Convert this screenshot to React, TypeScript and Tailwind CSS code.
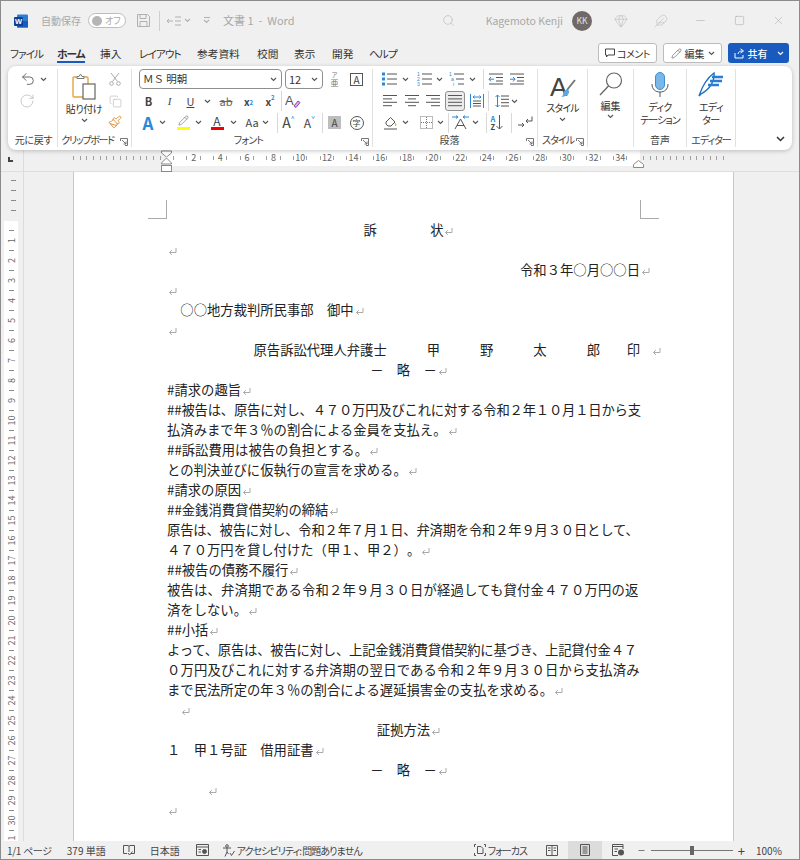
import type { ReactNode } from "react";
import { Copy, Feather, Gem, Minus, Paintbrush, Pencil, RotateCw, Search, Square, Undo2, X } from "lucide-react";

const BLUE = "#2b88d8";
const INK = "#555";

function Chev({ color = "#555" }: { color?: string }) {
  return (
    <svg width="7" height="5" viewBox="0 0 7 5" fill="none" stroke={color} strokeWidth="1.1">
      <path d="M1 1l2.5 2.5L6 1" />
    </svg>
  );
}

function Cell({ className = "", children }: { className?: string; children?: ReactNode }) {
  return <div className={"flex items-center justify-center shrink-0 h-full " + className}>{children}</div>;
}

function Sep({ className = "" }: { className?: string }) {
  return <div className={"w-px h-[20px] shrink-0 bg-[#d8d8d8] " + className} />;
}

function Launcher() {
  return (
    <svg className="absolute right-[3px] bottom-[1px]" width="8" height="8" viewBox="0 0 8 8" fill="none" stroke="#666" strokeWidth="0.9">
      <path d="M0.5 3V0.5H7.5V7.5H5M2 2l4 4M6 3.5V6H3.5" />
    </svg>
  );
}

function Label({ className = "", children }: { className?: string; children: ReactNode }) {
  return <div className={"mt-auto h-[14px] leading-[14px] text-[10px] text-[#444] text-center whitespace-nowrap " + className}>{children}</div>;
}

function LinesIcon({ rows }: { rows: number[][] }) {
  return (
    <svg width="16" height="14" viewBox="0 0 16 14" stroke="#555" strokeWidth="1">
      {rows.map(([a, b], i) => (
        <path key={i} d={`M${a} ${1.5 + i * 3.4}H${b}`} />
      ))}
    </svg>
  );
}

function ListIcon({ kind }: { kind: "bullet" | "number" | "multi" }) {
  const ys = [2, 7, 12];
  return (
    <svg width="16" height="14" viewBox="0 0 16 14" stroke="#555" strokeWidth="1">
      {ys.map((y, i) => {
        const x = kind === "multi" ? i * 2 : 0;
        return (
          <g key={y}>
            {kind === "bullet" ? (
              <rect x={x} y={y - 1.5} width="3" height="3" fill={BLUE} stroke="none" />
            ) : (
              <text x={x} y={y + 2} fontSize="5" fill={BLUE} stroke="none" fontFamily="Liberation Sans">{kind === "multi" ? ["1", "a", "i"][i] : i + 1}</text>
            )}
            <path d={`M${x + 5} ${y}H15`} />
          </g>
        );
      })}
    </svg>
  );
}

function IndentIcon({ dir }: { dir: "in" | "out" }) {
  return (
    <svg width="16" height="12" viewBox="0 0 16 12" fill="none" stroke="#555" strokeWidth="1">
      <path d="M1 1H15M8 4.5H15M8 8H15M1 11H15" />
      <path d={dir === "out" ? "M6 6.2H1M3 4L1 6.2 3 8.4" : "M1 6.2H6M4 4L6 6.2 4 8.4"} stroke={BLUE} />
    </svg>
  );
}

function PasteIcon() {
  return (
    <svg width="24" height="27" viewBox="0 0 24 27" fill="none">
      <rect x="1" y="4" width="15" height="20" rx="1" stroke="#e8a33d" strokeWidth="1.4" />
      <path d="M5 5.5V3.5H7L8.5 1l1.5 2.5H12V5.5Z" fill="#fff" stroke="#777" />
      <rect x="11" y="11" width="12" height="15" fill="#fff" stroke="#666" strokeWidth="1.2" />
    </svg>
  );
}

function Wordmark() {
  return (
    <svg width="14" height="14" viewBox="0 0 14 14">
      <rect x="3" y="0.5" width="11" height="13" rx="1" fill="#2b7cd3" />
      <rect x="3" y="7" width="11" height="6.5" fill="#185abd" />
      <rect x="0" y="3" width="9" height="9" rx="1" fill="#103f91" />
      <text x="4.5" y="10" fontSize="7.5" fontWeight="700" fill="#fff" textAnchor="middle" fontFamily="Liberation Sans">W</text>
    </svg>
  );
}

function Mark({ className = "ml-[1px] -mr-[10px]" }: { className?: string }) {
  return (
    <svg className={"inline-block align-[-1px] " + className} width="9" height="9" viewBox="0 0 9 9" fill="none" stroke="#aaa" strokeWidth="1">
      <path d="M8 1V5.5H1.5M3.8 3.2L1.5 5.5l2.3 2.3" />
    </svg>
  );
}

function Line({ className = "", mark, wrapped, children }: { className?: string; mark?: string; wrapped?: boolean; children?: ReactNode }) {
  return (
    <div className={"h-[20px] leading-[20px] whitespace-pre " + className}>
      {children}
      {!wrapped && <Mark className={mark} />}
    </div>
  );
}

function TitleBar() {
  return (
    <div className="flex items-center h-[39px] pl-[13px] pr-[14px] text-[#a8a8a8] shrink-0">
      <Wordmark />
      <span className="ml-[13px] text-[10px] whitespace-nowrap">自動保存</span>
      <div className="ml-[7px] w-[38px] h-[15px] rounded-full border border-[#bdbdbd] bg-white flex items-center pl-[3px] gap-[3px]">
        <span className="w-[10px] h-[10px] rounded-full bg-[#b5b5b5]" />
        <span className="text-[9px] leading-none [font-feature-settings:'palt']">オフ</span>
      </div>
      <svg className="ml-[11px]" width="13" height="13" viewBox="0 0 13 13" fill="none" stroke="#b0b0b0">
        <path d="M.5.5H10.5L12.5 2.5V12.5H.5ZM3 .5V4.5H9V.5M3 12.5V7.5H10V12.5" />
      </svg>
      <div className="ml-[9px] w-px h-[20px] bg-[#cfcfcf]" />
      <svg className="ml-[7px]" width="14" height="10" viewBox="0 0 14 10" fill="none" stroke="#b0b0b0">
        <path d="M0 5H6M2 3L0 5l2 2M8 1H14M8 5H14M8 9H14" />
      </svg>
      <span className="ml-[3px]"><Chev color="#b0b0b0" /></span>
      <span className="ml-[12px] flex flex-col items-center gap-[1px]">
        <span className="w-[6px] h-px bg-[#b0b0b0]" />
        <Chev color="#b0b0b0" />
      </span>
      <span className="ml-[13px] text-[11px] whitespace-pre">文書 1  -  Word</span>
      <Search className="ml-auto" size={13} color="#b8b8b8" strokeWidth={1.2} />
      <span className="ml-[31px] text-[10.5px] whitespace-nowrap">Kagemoto Kenji</span>
      <div className="ml-[9px] w-[20px] h-[20px] rounded-full bg-[#6f6a68] text-[#e5e5e5] text-[8.5px] flex items-center justify-center">KK</div>
      <Gem className="ml-[22px]" size={14} color="#b8b8b8" strokeWidth={1} />
      <Feather className="ml-[26px]" size={14} color="#b8b8b8" strokeWidth={1} />
      <Minus className="ml-[26px]" size={13} color="#a8a8a8" strokeWidth={1} />
      <Square className="ml-[27px]" size={11} color="#a8a8a8" strokeWidth={1.2} />
      <X className="ml-[27px]" size={13} color="#a8a8a8" strokeWidth={1} />
    </div>
  );
}

function TabRow() {
  return (
    <div className="flex items-start h-[26px] pl-[9px] text-[10.7px] text-[#333] shrink-0 [font-feature-settings:'palt']">
      <span className="w-[47px] pt-[6px] tracking-[-1px]">ファイル</span>
      <span className="w-[43px] pt-[6px] font-bold tracking-[-1px]">
        <span className="inline-block h-[17px] leading-[16px] border-b-2 border-[#185abd]">ホーム</span>
      </span>
      <span className="w-[39px] pt-[6px]">挿入</span>
      <span className="w-[58px] pt-[6px] tracking-[-1px]">レイアウト</span>
      <span className="w-[60px] pt-[6px]">参考資料</span>
      <span className="w-[37px] pt-[6px]">校閲</span>
      <span className="w-[38px] pt-[6px]">表示</span>
      <span className="w-[37px] pt-[6px]">開発</span>
      <span className="w-[40px] pt-[6px] tracking-[-1px]">ヘルプ</span>
      <div className="ml-auto mr-[10px] mt-[3px] flex items-center gap-[6px]">
        <div className="w-[59px] h-[20px] rounded-[3px] border border-[#bcbcbc] bg-white flex items-center justify-center gap-[2px] text-[10px] tracking-[-0.5px]">
          <svg width="10" height="10" viewBox="0 0 10 10" fill="none" stroke="#444"><path d="M.5 1H9.500V7H3L1.500 9V7H.5Z" /></svg>
          コメント
        </div>
        <div className="w-[59px] h-[20px] rounded-[3px] border border-[#bcbcbc] bg-white flex items-center justify-center gap-[3px] text-[10px]">
          <Pencil size={11} color="#444" strokeWidth={1.2} />
          編集
          <Chev />
        </div>
        <div className="w-[61px] h-[20px] rounded-[3px] bg-[#185abd] text-white flex items-center justify-center gap-[3px] text-[10px] font-medium">
          <svg width="11" height="11" viewBox="0 0 11 11" fill="none" stroke="#fff"><path d="M1 5V10H9V7M4 6C4.500 3.800 6 3 8 3M6.500 .8L9.500 3 6.500 5" /></svg>
          <span>共有</span>
          <span className="ml-[6px]"><Chev color="#fff" /></span>
        </div>
      </div>
    </div>
  );
}

function Ribbon() {
  return (
    <div className="mx-[7px] h-[84px] shrink-0 rounded-lg bg-white shadow-[0_1px_4px_rgba(0,0,0,0.22)] flex relative z-10 font-['Noto_Sans_CJK_JP',sans-serif] [font-feature-settings:'palt']">
      {/* 元に戻す */}
      <div className="w-[50px] my-[3px] border-r border-[#e1e1e1] flex flex-col">
        <div className="flex h-[20px] pl-[10px]">
          <Cell className="w-[20px]"><Undo2 size={16} color={INK} strokeWidth={1.3} /></Cell>
          <Cell className="w-[10px]"><Chev /></Cell>
        </div>
        <div className="flex h-[20px] pl-[9px] mt-[2px]">
          <Cell className="w-[20px]"><RotateCw size={16} color="#bdbdbd" strokeWidth={1.2} /></Cell>
        </div>
        <Label className="pl-[2px] tracking-[-0.3px]">元に戻す</Label>
      </div>

      {/* クリップボード */}
      <div className="relative w-[74px] my-[3px] border-r border-[#e1e1e1] flex flex-col">
        <div className="flex pl-[4px]">
          <div className="w-[44px] flex flex-col items-center pt-[4px]">
            <PasteIcon />
            <span className="text-[10px] tracking-[-0.4px] leading-[13px] mt-[2px] whitespace-nowrap text-[#333]">貼り付け</span>
            <span className="mt-[3px]"><Chev /></span>
          </div>
          <div className="w-[18px] flex flex-col">
            <Cell className="!h-[20px]">
              <svg width="12" height="14" viewBox="0 0 12 14" fill="none" stroke="#aaa"><path d="M2 1L8.500 9.500M10 1L3.500 9.500" /><circle cx="2.500" cy="11.500" r="1.800" /><circle cx="9.500" cy="11.500" r="1.800" /></svg>
            </Cell>
            <Cell className="!h-[20px] mt-[2px]"><Copy size={13} color="#aaa" strokeWidth={1} /></Cell>
            <Cell className="!h-[21px]"><Paintbrush size={14} color="#d9822b" strokeWidth={1.5} /></Cell>
          </div>
        </div>
        <Label className="pr-[14px] tracking-[-1.3px]">クリップボード</Label>
        <Launcher />
      </div>

      {/* フォント */}
      <div className="relative w-[241px] my-[3px] border-r border-[#e1e1e1] flex flex-col pl-[7px]">
        <div className="flex h-[20px] items-center">
          <div className="w-[143px] h-[20px] rounded-[4px] border border-[#8f8f8f] flex items-center justify-between pl-[3px] pr-[4px] text-[10.5px] text-[#333] [font-feature-settings:normal] whitespace-pre">
            <span>ＭＳ 明朝</span><Chev />
          </div>
          <div className="ml-[3px] w-[38px] h-[20px] rounded-[4px] border border-[#8f8f8f] flex items-center justify-between pl-[3px] pr-[4px] text-[11px] text-[#333]">
            <span>12</span><Chev />
          </div>
          <Cell className="w-[23px] flex-col text-[#777]">
            <span className="text-[6px] leading-[7px]">ア</span>
            <span className="text-[8px] leading-[9px]">亜</span>
          </Cell>
          <Cell className="w-[21px]">
            <span className="w-[13px] h-[13px] border border-[#555] text-[10px] leading-[12px] text-center text-[#444]">A</span>
          </Cell>
        </div>
        <div className="flex h-[20px] mt-[2px] items-center text-[#444]">
          <Cell className="w-[19px] text-[11px] font-bold">B</Cell>
          <Cell className="w-[23px] text-[11px] italic font-['Liberation_Serif',serif]">I</Cell>
          <Cell className="w-[19px] text-[11px] underline">U</Cell>
          <Cell className="w-[14px]"><Chev /></Cell>
          <Cell className="w-[24px] text-[11px] line-through text-[#666]">ab</Cell>
          <Cell className="w-[21px] text-[10px] font-bold">x<sub className="text-[6px] text-[#2b88d8]">2</sub></Cell>
          <Cell className="w-[22px] text-[10px] font-bold">x<sup className="text-[6px] text-[#2b88d8]">2</sup></Cell>
          <Sep />
          <Cell className="w-[22px]">
            <svg width="16" height="16" viewBox="0 0 16 16" fill="none">
              <text x="0" y="12" fontSize="13" fill="#555" fontFamily="Liberation Sans">A</text>
              <path d="M9 13L13 8l2 1.500-4 5Z" fill="#d9b3e6" stroke="#8e44ad" />
            </svg>
          </Cell>
        </div>
        <div className="flex h-[21px] mt-[1px] items-center text-[#444]">
          <Cell className="w-[18px]"><span className="text-[17px] font-bold leading-none text-[#2b88d8]">A</span></Cell>
          <Cell className="w-[11px]"><Chev /></Cell>
          <Cell className="w-[20px] ml-[5px] flex-col">
            <Pencil size={11} color="#666" strokeWidth={1.3} />
            <span className="w-[13px] h-[3px] mt-[1px] bg-[#ffff00]" />
          </Cell>
          <Cell className="w-[10px]"><Chev /></Cell>
          <Cell className="w-[18px] ml-[5px] flex-col">
            <span className="text-[12px] leading-[12px]">A</span>
            <span className="w-[13px] h-[3px] bg-[#f00000]" />
          </Cell>
          <Cell className="w-[10px] ml-[2px]"><Chev /></Cell>
          <Cell className="w-[16px] ml-[6px] text-[11px]">Aa</Cell>
          <Cell className="w-[10px]"><Chev /></Cell>
          <Sep className="ml-[7px]" />
          <Cell className="w-[21px] text-[14px]"><span>A</span><span className="text-[7px] text-[#2b88d8] -mt-[8px]">^</span></Cell>
          <Cell className="w-[21px] text-[12px]"><span>A</span><span className="text-[7px] text-[#2b88d8] -mt-[7px]">ˇ</span></Cell>
          <Sep className="ml-[2px]" />
          <Cell className="w-[23px]">
            <span className="w-[13px] h-[13px] bg-[#bdbdbd] text-[10px] leading-[13px] text-center">A</span>
          </Cell>
          <Cell className="w-[21px]">
            <span className="w-[14px] h-[14px] rounded-full border border-[#555] text-[8px] leading-[12px] text-center">字</span>
          </Cell>
        </div>
        <Label className="pr-[14px] tracking-[-0.8px]">フォント</Label>
        <Launcher />
      </div>

      {/* 段落 */}
      <div className="relative w-[165px] my-[3px] border-r border-[#e1e1e1] flex flex-col pl-[7px]">
        <div className="flex h-[20px] items-center">
          <Cell className="w-[20px]"><ListIcon kind="bullet" /></Cell>
          <Cell className="w-[10px]"><Chev /></Cell>
          <Cell className="w-[20px] ml-[5px]"><ListIcon kind="number" /></Cell>
          <Cell className="w-[9px]"><Chev /></Cell>
          <Cell className="w-[20px] ml-[3px]"><ListIcon kind="multi" /></Cell>
          <Cell className="w-[10px]"><Chev /></Cell>
          <Sep className="ml-[6px]" />
          <Cell className="w-[20px] ml-[2px]"><IndentIcon dir="out" /></Cell>
          <Cell className="w-[20px] ml-[1px]"><IndentIcon dir="in" /></Cell>
        </div>
        <div className="flex h-[20px] mt-[2px] items-center">
          <Cell className="w-[20px]"><LinesIcon rows={[[1, 15], [1, 10], [1, 15], [1, 10]]} /></Cell>
          <Cell className="w-[20px] ml-[2px]"><LinesIcon rows={[[1, 15], [4, 12], [1, 15], [4, 12]]} /></Cell>
          <Cell className="w-[20px] ml-[1px]"><LinesIcon rows={[[1, 15], [6, 15], [1, 15], [6, 15]]} /></Cell>
          <Cell className="w-[20px] ml-[2px] rounded-[3px] border border-[#8f8f8f] bg-[#ececec]"><LinesIcon rows={[[1, 15], [1, 15], [1, 15], [1, 15]]} /></Cell>
          <Cell className="w-[20px] ml-[2px]">
            <svg width="14" height="14" viewBox="0 0 14 14" fill="none" stroke={BLUE}>
              <path d="M.5 0V14M13.500 0V14M3 3H11M4.500 1.500L3 3l1.500 1.500M9.500 1.500L11 3 9.500 4.500" />
              <path d="M3 7H11M3 9.500H11M3 12H11" stroke="#555" />
            </svg>
          </Cell>
          <Sep className="ml-[1px]" />
          <Cell className="w-[15px] ml-[5px]">
            <svg width="14" height="14" viewBox="0 0 14 14" fill="none" stroke={BLUE}>
              <path d="M2.500 1V13M.5 3L2.500 1l2 2M.5 11l2 2 2-2" />
              <path d="M6 2H14M6 5.300H14M6 8.700H14M6 12H14" stroke="#555" />
            </svg>
          </Cell>
          <Cell className="w-[10px]"><Chev /></Cell>
        </div>
        <div className="flex h-[21px] mt-[1px] items-center">
          <Cell className="w-[20px]">
            <svg width="15" height="15" viewBox="0 0 15 15" fill="none" stroke="#555">
              <path d="M3 7L7.500 2.500 12 7 8 11H5L3 9Z" />
              <path d="M12 8c1 1.200 1.500 2 0 3" fill="#e8a33d" stroke="#e8a33d" />
              <path d="M1 14H14" />
            </svg>
          </Cell>
          <Cell className="w-[10px]"><Chev /></Cell>
          <Cell className="w-[20px] ml-[6px]">
            <svg width="13" height="13" viewBox="0 0 13 13" fill="none" stroke="#777" strokeDasharray="1 1">
              <path d="M.5.5H12.500V12.500H.5ZM6.500 1V12M1 6.500H12" />
            </svg>
          </Cell>
          <Cell className="w-[8px]"><Chev /></Cell>
          <Sep className="ml-[4px]" />
          <Cell className="w-[20px] ml-[1px]">
            <svg width="17" height="15" viewBox="0 0 17 15" fill="none" stroke="#555">
              <path d="M3 14L8.500 4 14 14M5 10.500H12" />
              <path d="M0 2H6M4 0.500L6 2 4 3.500M17 2H11M13 .5L11 2l2 1.500" stroke={BLUE} />
            </svg>
          </Cell>
          <Cell className="w-[10px]"><Chev /></Cell>
          <Sep className="ml-[6px]" />
          <Cell className="w-[20px] gap-[1px]">
            <span className="flex flex-col text-[7.5px] leading-[8px] font-bold">
              <span className="text-[#2b88d8]">A</span>
              <span className="text-[#444]">Z</span>
            </span>
            <svg width="7" height="15" viewBox="0 0 7 15" fill="none" stroke="#555"><path d="M3.500 0V14M.5 11l3 3 3-3" /></svg>
          </Cell>
          <Sep className="ml-[4px]" />
          <Cell className="w-[20px] ml-[3px]">
            <svg width="15" height="13" viewBox="0 0 15 13" fill="none" stroke="#555">
              <path d="M14 .5V5H8M10 3L8 5l2 2M0 9H6M4 7l2 2-2 2" />
            </svg>
          </Cell>
        </div>
        <Label className="pr-[18px]">段落</Label>
        <Launcher />
      </div>

      {/* スタイル */}
      <div className="relative w-[50px] my-[3px] border-r border-[#e1e1e1] flex flex-col items-center">
        <svg className="mt-[4px]" width="27" height="27" viewBox="0 0 27 27" fill="none">
          <text x="1" y="23" fontSize="26" fill="#444" fontFamily="Liberation Sans">A</text>
          <path d="M26 7L18 17" stroke="#777" strokeWidth="2" />
          <path d="M14 20c2-4 5-4 6-2s-2 6-8 6c2-1 2-2 2-4Z" fill="#5ba7e0" />
        </svg>
        <span className="text-[10px] tracking-[-0.9px] leading-[13px] mt-[1px] text-[#333] whitespace-nowrap">スタイル</span>
        <span className="mt-[3px]"><Chev /></span>
        <Label className="self-start pl-[4px] tracking-[-0.9px]">スタイル</Label>
        <Launcher />
      </div>

      {/* 編集 */}
      <div className="w-[46px] my-[3px] border-r border-[#e1e1e1] flex flex-col items-center">
        <svg className="mt-[2px]" width="26" height="26" viewBox="0 0 26 26" fill="none" stroke="#666">
          <circle cx="16" cy="9.500" r="7.500" strokeWidth="1.200" />
          <path d="M10.500 15L2 24" strokeWidth="1.300" />
        </svg>
        <span className="text-[10px] leading-[13px] mt-[2px] text-[#333]">編集</span>
        <span className="mt-[2px]"><Chev /></span>
      </div>

      {/* 音声 */}
      <div className="w-[53px] my-[3px] border-r border-[#e1e1e1] flex flex-col items-center">
        <svg className="mt-[3px]" width="18" height="25" viewBox="0 0 18 25" fill="none">
          <rect x="4.500" y="0.500" width="9" height="17" rx="4.500" fill="#78b7e8" stroke="#3d8fd1" />
          <path d="M1 12c0 5.500 3.500 8 8 8s8-2.500 8-8M9 20V25" stroke="#555" />
        </svg>
        <span className="text-[10px] tracking-[-0.6px] leading-[13px] mt-[3px] text-[#333]">ディク</span>
        <span className="text-[10px] tracking-[-0.9px] leading-[13px] whitespace-nowrap text-[#333]">テーション</span>
        <Label>音声</Label>
      </div>

      {/* エディター */}
      <div className="w-[49px] my-[3px] border-r border-[#e1e1e1] flex flex-col items-center">
        <svg className="mt-[3px]" width="26" height="25" viewBox="0 0 26 25" fill="none" stroke="#1f6fc0" strokeWidth="1.400">
          <path d="M1 24C4 15 9 6 16 1c1 8-4 16-13 21Z" />
          <path d="M14 5H25M12 9H24M10 13H21" strokeWidth="2.400" stroke="#2b7cd3" />
        </svg>
        <span className="text-[10px] tracking-[-0.6px] leading-[13px] mt-[3px] text-[#333]">エディ</span>
        <span className="text-[10px] tracking-[-0.6px] leading-[13px] text-[#333]">ター</span>
        <Label className="tracking-[-1px]">エディター</Label>
      </div>

      <div className="flex-1 flex items-end justify-end pr-[7px] pb-[8px]">
        <svg width="9" height="6" viewBox="0 0 9 6" fill="none" stroke="#333" strokeWidth="1.500"><path d="M1 1l3.500 3.500L8 1" /></svg>
      </div>
    </div>
  );
}

function HTick({ className = "" }: { className?: string }) {
  return <span className={"w-px h-[4px] bg-[#a0a0a0] shrink-0 " + className} />;
}

function HRuler() {
  const nums = [2, 4, 6, 8, 10, 12, 14, 16, 18, 20, 22, 24, 26, 28, 30, 32, 34];
  const left = Array.from({ length: 14 }, (_, i) => i);
  const right = Array.from({ length: 13 }, (_, i) => i);
  return (
    <div className="relative flex h-[22px] shrink-0 border-b border-[#dedede]">
      <div className="w-[23px] shrink-0 border-r border-[#dcdcdc] flex justify-center pt-[7px] pr-[3px]">
        <span className="w-[5px] h-[5px] border-l-2 border-b-2 border-[#444]" />
      </div>
      <div className="w-[49px] shrink-0" />
      <div className="w-[94px] h-[16px] shrink-0 flex items-center">
        {left.map((i) => (
          <span key={i} className="w-[6.667px] flex"><HTick /></span>
        ))}
      </div>
      <div className="w-[473px] h-[16px] shrink-0 bg-white flex items-center text-[9px] text-[#666]">
        <span className="w-[13.33px] flex justify-center"><HTick /></span>
        {nums.map((n) => (
          <span key={n} className="w-[26.667px] flex justify-center items-center shrink-0">
            <HTick />
            <span className="w-[12.33px] flex justify-center">{n}</span>
            <HTick />
          </span>
        ))}
      </div>
      <div className="h-[16px] flex items-center pl-[3px]">
        {right.map((i) => (
          <span key={i} className="w-[6.667px] flex"><HTick /></span>
        ))}
      </div>
      {/* インデントのマーカー */}
      <svg className="absolute left-[160px] top-0" width="11" height="22" viewBox="0 0 11 22" fill="#fff" stroke="#8a8a8a">
        <path d="M.5 1H10.500V3L5.500 7 .5 3ZM5.500 8L10.500 13V14H.5V13Z" />
        <rect x="0.500" y="15.500" width="10" height="6" />
      </svg>
      <svg className="absolute left-[632px] top-[10px]" width="11" height="8" viewBox="0 0 11 8" fill="#fff" stroke="#8a8a8a">
        <path d="M.5 7.500V4.500L5.500.5l5 4V7.500Z" />
      </svg>
    </div>
  );
}

function VRuler() {
  const nums = Array.from({ length: 31 }, (_, i) => i + 1);
  return (
    <div className="w-[23px] shrink-0 border-r border-[#dcdcdc] flex flex-col overflow-hidden">
      <div className="h-[49px] pl-[10px] pt-[8px] flex flex-col gap-[9px] shrink-0 pr-[3px]">
        <span className="w-[5px] h-px bg-[#8a8a8a]" />
        <span className="w-[5px] h-px bg-[#8a8a8a]" />
        <span className="w-[5px] h-px bg-[#8a8a8a]" />
        <span className="w-[5px] h-px bg-[#8a8a8a]" />
      </div>
      <div className="ml-[3px] w-[14px] bg-white pt-[4px] flex flex-col text-[9px] text-[#666] shrink-0">
        {nums.map((n) => (
          <div key={n} className="h-[20px] flex flex-col items-center">
            <div className="h-[10px] flex items-center"><span className="w-[5px] h-px bg-[#8a8a8a]" /></div>
            <div className="h-[10px] flex items-center"><span className="-rotate-90 leading-none">{n}</span></div>
          </div>
        ))}
      </div>
    </div>
  );
}

function Page() {
  return (
    <div className="relative w-[661px] shrink-0 bg-white border-x border-[#c8c8c8] pt-[48px] pl-[93px] text-[13.33px] text-[#222] font-['Noto_Sans_CJK_JP',sans-serif] [text-spacing-trim:space-all]">
      <span className="absolute left-[74px] top-[28px] w-[19px] h-[19px] border-r border-b border-[#aaa]" />
      <span className="absolute left-[566px] top-[28px] w-[19px] h-[19px] border-l border-b border-[#aaa]" />
      <div className="w-[473px]">
        <Line className="text-center">訴　　　　状</Line>
        <Line />
        <Line className="text-right">令和３年○月○○日</Line>
        <Line />
        <Line>　○○地方裁判所民事部　御中</Line>
        <Line />
        <Line className="text-right" mark="ml-[12px] -mr-[21px]">原告訴訟代理人弁護士　　　甲　　　野　　　太　　　郎　　印</Line>
        <Line className="text-center">－　略　－</Line>
        <Line>#請求の趣旨</Line>
        <Line wrapped className="tracking-[-0.2px]">##被告は、原告に対し、４７０万円及びこれに対する令和２年１０月１日から支</Line>
        <Line>払済みまで年３％の割合による金員を支払え。</Line>
        <Line>##訴訟費用は被告の負担とする。</Line>
        <Line>との判決並びに仮執行の宣言を求める。</Line>
        <Line>#請求の原因</Line>
        <Line>##金銭消費貸借契約の締結</Line>
        <Line wrapped className="tracking-[-0.2px]">原告は、被告に対し、令和２年７月１日、弁済期を令和２年９月３０日として、</Line>
        <Line>４７０万円を貸し付けた（甲１、甲２）。</Line>
        <Line>##被告の債務不履行</Line>
        <Line wrapped className="tracking-[0.18px]">被告は、弁済期である令和２年９月３０日が経過しても貸付金４７０万円の返</Line>
        <Line>済をしない。</Line>
        <Line>##小括</Line>
        <Line wrapped className="tracking-[-0.2px]">よって、原告は、被告に対し、上記金銭消費貸借契約に基づき、上記貸付金４７</Line>
        <Line wrapped className="tracking-[0.18px]">０万円及びこれに対する弁済期の翌日である令和２年９月３０日から支払済み</Line>
        <Line>まで民法所定の年３％の割合による遅延損害金の支払を求める。</Line>
        <Line>　</Line>
        <Line className="text-center">証拠方法</Line>
        <Line>１　甲１号証　借用証書</Line>
        <Line className="text-center">－　略　－</Line>
        <Line>　　　</Line>
        <Line />
      </div>
    </div>
  );
}

function StatusBar() {
  return (
    <div className="flex items-center h-[18px] shrink-0 pl-[6px] text-[10px] text-[#444] whitespace-nowrap font-['Noto_Sans_CJK_JP',sans-serif] [font-feature-settings:'palt']">
      <span className="tracking-[-0.3px]">1/1 ページ</span>
      <span className="ml-[15px]">379 単語</span>
      <svg className="ml-[17px]" width="12" height="12" viewBox="0 0 12 12" fill="none" stroke="#555">
        <path d="M.5 1.500H5C5.500 1.500 6 2 6 2.500 6 2 6.500 1.500 7 1.500H11.500V9.500H8M.5 1.500V9.500H4M6 2.500V8M5 9l1.500 2 3-3.500" />
      </svg>
      <span className="ml-[15px]">日本語</span>
      <svg className="ml-[16px]" width="13" height="12" viewBox="0 0 13 12" fill="none" stroke="#555">
        <path d="M.5.5H12.500V11.500H.5ZM.5 3H12.500M2.500 5.500H5M2.500 8H5" />
        <circle cx="8.500" cy="7.500" r="2" fill="#555" />
      </svg>
      <svg className="ml-[13px]" width="13" height="13" viewBox="0 0 13 13" fill="none" stroke="#555">
        <circle cx="5" cy="2" r="1.300" />
        <path d="M1 4H9M5 4V8L3 12.500M5 8l1.500 2M8 9l1.500 2.500L12.500 7" />
      </svg>
      <span className="ml-[2px] tracking-[-0.95px]">アクセシビリティ: 問題ありません</span>
      <div className="ml-auto h-full flex items-center">
        <svg width="12" height="12" viewBox="0 0 12 12" fill="none" stroke="#555">
          <path d="M3.500 2.500H7L9 4.500V9.500H3.500ZM0.500 3V.5H2M10 .5H11.500V3M.5 9V11.500H2M10 11.500H11.500V9" />
        </svg>
        <span className="ml-[2px] w-[37px] tracking-[-1px]">フォーカス</span>
        <svg className="ml-[21px]" width="12" height="11" viewBox="0 0 12 11" fill="none" stroke="#555">
          <path d="M.5.5H11.500V10.500H.5ZM6 .5V10.500M2 3H4.500M2 5.500H4.500M7.500 3H10M7.500 5.500H10" />
        </svg>
        <Cell className="ml-[10px] w-[34px] bg-[#dcdcdc]">
          <svg width="10" height="12" viewBox="0 0 10 12" fill="none" stroke="#555">
            <path d="M.5.5H9.500V11.500H.5ZM2.500 3H7.500M2.500 5H7.500M2.500 7H7.500M2.500 9H7.500" />
          </svg>
        </Cell>
        <svg className="ml-[10px]" width="13" height="12" viewBox="0 0 13 12" fill="none" stroke="#555">
          <path d="M6 11.500H.5V.5H11V5M.5 2.500H11M2.500 5H6M2.500 7.500H5" />
          <circle cx="9" cy="8.500" r="3" fill="#555" stroke="none" />
        </svg>
        <Minus className="ml-[12px]" size={9} color="#555" />
        <div className="ml-[5px] w-[82px] h-px bg-[#777] flex items-center pl-[39px]">
          <span className="w-[4px] h-[9px] bg-[#666]" />
        </div>
        <span className="ml-[5px] text-[13px] leading-none">+</span>
        <span className="ml-[11px] mr-[16px] w-[27px]">100%</span>
      </div>
    </div>
  );
}

export default function App() {
  return (
    <div className="w-[800px] h-[860px] flex flex-col overflow-hidden border border-[#8c8c8c] bg-[#f0f0f0] font-['Noto_Sans_CJK_JP',sans-serif]">
      <TitleBar />
      <TabRow />
      <Ribbon />
      <HRuler />
      <div className="flex flex-1 min-h-0 overflow-hidden">
        <VRuler />
        <div className="w-[49px] shrink-0" />
        <Page />
      </div>
      <StatusBar />
    </div>
  );
}
